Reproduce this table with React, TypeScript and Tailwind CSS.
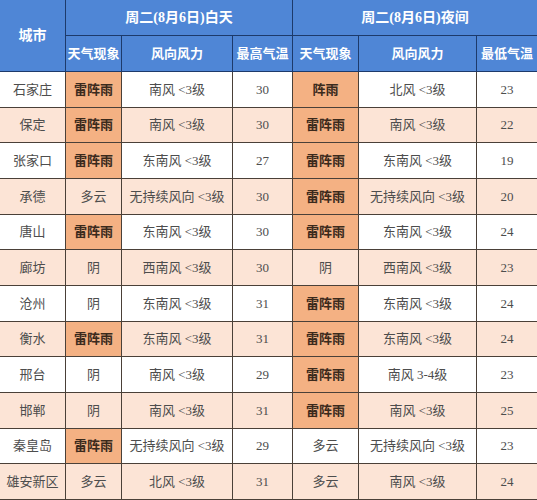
const rows: [string, string, string, string, string, string, string][] = [
  ['石家庄', '雷阵雨', '南风 <3级', '30', '阵雨', '北风 <3级', '23'],
  ['保定', '雷阵雨', '南风 <3级', '30', '雷阵雨', '南风 <3级', '22'],
  ['张家口', '雷阵雨', '东南风 <3级', '27', '雷阵雨', '东南风 <3级', '19'],
  ['承德', '多云', '无持续风向 <3级', '30', '雷阵雨', '无持续风向 <3级', '20'],
  ['唐山', '雷阵雨', '东南风 <3级', '30', '雷阵雨', '东南风 <3级', '24'],
  ['廊坊', '阴', '西南风 <3级', '30', '阴', '西南风 <3级', '23'],
  ['沧州', '阴', '东南风 <3级', '31', '雷阵雨', '东南风 <3级', '24'],
  ['衡水', '雷阵雨', '东南风 <3级', '31', '雷阵雨', '东南风 <3级', '24'],
  ['邢台', '阴', '南风 <3级', '29', '雷阵雨', '南风 3-4级', '23'],
  ['邯郸', '阴', '南风 <3级', '31', '雷阵雨', '南风 <3级', '25'],
  ['秦皇岛', '雷阵雨', '无持续风向 <3级', '29', '多云', '无持续风向 <3级', '23'],
  ['雄安新区', '多云', '北风 <3级', '31', '多云', '南风 <3级', '24'],
];

const isRain = (s: string) => s.includes('雨');

function Weather({ text, bg }: { text: string; bg: string }) {
  if (isRain(text)) {
    return (
      <div className="flex items-center justify-center border-r border-b border-[#4a4038] bg-[#f4b183] font-bold text-[#3b2a1c]">
        {text}
      </div>
    );
  }
  return <div className={`flex items-center justify-center border-r border-b border-[#4a4038] ${bg}`}>{text}</div>;
}

export default function App() {
  const head = 'flex items-center justify-center border-r border-b border-[#1d3a6b] bg-[#4f86d6] font-semibold text-white';
  return (
    <div
      className="grid h-[500px] w-[537px] grid-cols-[66px_56px_111px_60px_66px_118px_60px] grid-rows-[36px_36px_repeat(12,1fr)] text-[13px] text-[#4d4d4d]"
      style={{ fontFamily: '"Liberation Serif", "Noto Sans CJK SC", serif' }}
    >
      <div className={`${head} row-span-2 text-[14px]`}>城市</div>
      <div className={`${head} col-span-3 text-[14px]`}>周二(8月6日)白天</div>
      <div className={`${head} col-span-3 border-r-0 text-[14px]`}>周二(8月6日)夜间</div>
      <div className={head}>天气现象</div>
      <div className={head}>风向风力</div>
      <div className={head}>最高气温</div>
      <div className={head}>天气现象</div>
      <div className={head}>风向风力</div>
      <div className={`${head} border-r-0`}>最低气温</div>
      {rows.map((r, i) => {
        const bg = i % 2 === 1 ? 'bg-[#fce4d6]' : 'bg-white';
        const cell = `flex items-center justify-center border-r border-b border-[#4a4038] ${bg}`;
        return [
          <div key={`${i}a`} className={cell}>{r[0]}</div>,
          <Weather key={`${i}b`} text={r[1]} bg={bg} />,
          <div key={`${i}c`} className={cell}>{r[2]}</div>,
          <div key={`${i}d`} className={cell}>{r[3]}</div>,
          <Weather key={`${i}e`} text={r[4]} bg={bg} />,
          <div key={`${i}f`} className={cell}>{r[5]}</div>,
          <div key={`${i}g`} className={`${cell} border-r-0`}>{r[6]}</div>,
        ];
      })}
    </div>
  );
}
